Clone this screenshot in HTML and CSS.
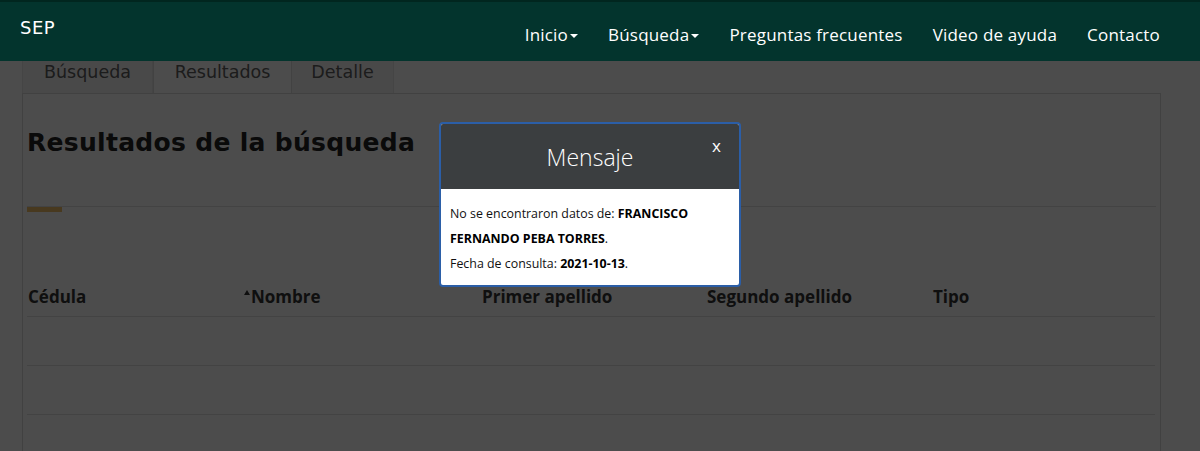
FILE: index.html
```
<!DOCTYPE html>
<html lang="es">
<head>
  <meta charset="UTF-8" />
  <title>Cédula profesional - Resultados</title>
  <link rel="stylesheet" href="styles.css">
</head>
<body>
  <header class="navbar">
    <a href="#" class="brand">SEP</a>
    <nav class="menu">
      <a href="#">Inicio<span class="caret"></span></a>
      <a href="#">Búsqueda<span class="caret"></span></a>
      <a href="#">Preguntas frecuentes</a>
      <a href="#">Video de ayuda</a>
      <a href="#">Contacto</a>
    </nav>
  </header>

  <main class="page">
    <div class="tabs">
      <div class="tab">Búsqueda</div>
      <div class="tab active">Resultados</div>
      <div class="tab">Detalle</div>
    </div>

    <section class="panel">
      <h1>Resultados de la búsqueda</h1>
      <div class="rule"></div>

      <table class="results">
        <thead>
          <tr>
            <th class="c1">Cédula</th>
            <th class="c2"><span class="sort"></span>Nombre</th>
            <th class="c3">Primer apellido</th>
            <th class="c4">Segundo apellido</th>
            <th>Tipo</th>
          </tr>
        </thead>
        <tbody>
          <tr><td></td><td></td><td></td><td></td><td></td></tr>
          <tr class="odd"><td></td><td></td><td></td><td></td><td></td></tr>
        </tbody>
      </table>
    </section>
  </main>

  <div class="overlay"></div>

  <div class="modal">
    <div class="modal-head">
      <h2>Mensaje</h2>
      <span class="close">x</span>
    </div>
    <div class="modal-body">
      <p>No se encontraron datos de: <b>FRANCISCO</b><br><b>FERNANDO PEBA TORRES</b>.</p>
      <p>Fecha de consulta: <b>2021-10-13</b>.</p>
    </div>
  </div>
</body>
</html>
```

FILE: styles.css
```
html, body {
  margin: 0;
  padding: 0;
  height: 100%;
  overflow: hidden;
  background: #fff;
  font-family: 'Open Sans', 'Liberation Sans', sans-serif;
}

/* Top bar (stays above the overlay) */
.navbar {
  position: fixed;
  top: 0; left: 0; right: 0;
  z-index: 20;
  height: 59px;
  border-top: 2px solid #01261f;
  background: #03342d;
  display: flex;
  align-items: center;
  justify-content: space-between;
  padding: 0 40px 0 20px;
}
.brand {
  color: #fff;
  text-decoration: none;
  font-family: 'DejaVu Sans', sans-serif;
  font-size: 18px;
  letter-spacing: 0.5px;
  margin-top: -8px;
}
.menu {
  display: flex;
  gap: 30px;
  margin-top: 6px;
}
.menu a {
  color: #fff;
  text-decoration: none;
  font-size: 17px;
  letter-spacing: 0.2px;
}
.caret {
  display: inline-block;
  margin-left: 2px;
  vertical-align: middle;
  border-top: 4px solid #fff;
  border-left: 4px solid transparent;
  border-right: 4px solid transparent;
}

/* Page */
.page {
  padding-top: 50px;
  margin-left: 22px;
  width: 1139px;
}
.tabs {
  display: flex;
}
.tab {
  height: 42px;
  line-height: 42px;
  border: 1px solid #e6e6e6;
  border-bottom: none;
  background: #f6f6f6;
  color: #5e5e5e;
  font-family: 'DejaVu Sans', sans-serif;
  font-size: 17.5px;
  text-align: center;
  width: 129px;
}
.tab + .tab { border-left: none; }
.tab.active {
  width: 137px;
  background: #fff;
  border-left: 1px solid #dcdcdc;
  border-right: 1px solid #dcdcdc;
}
.tab:last-child { width: 101px; }

.panel {
  border: 1px solid #d9d9d9;
  border-bottom: none;
  height: 357px;
  padding: 0 4px;
}
h1 {
  margin: 34px 0 0;
  font-family: 'DejaVu Sans', sans-serif;
  font-weight: bold;
  font-size: 25px;
  letter-spacing: 0.3px;
  color: #222;
}
.rule {
  margin-top: 49px;
  border-top: 1px solid #e2e2e2;
  height: 0;
}
.rule::before {
  content: '';
  display: block;
  width: 35px;
  height: 5px;
  background: #f0c06a;
}

/* Results table */
.results {
  width: 1128px;
  margin-top: 78px;
  border-collapse: collapse;
  table-layout: fixed;
}
.results th {
  text-align: left;
  padding: 0 0 8px 1px;
  font-size: 17px;
  font-weight: bold;
  color: #333;
  border-bottom: 1px solid #e0e0e0;
}
.results .c1 { width: 215px; }
.results .c2 { width: 237px; }
.results .c3 { width: 224px; }
.results .c4 { width: 225px; }
.results td {
  height: 48px;
  padding: 0;
  border-bottom: 1px solid #e0e0e0;
}
.results tr.odd td { background: #fdfdfd; }
.sort {
  display: inline-block;
  vertical-align: top;
  margin: 5px 1px 0 0;
  border-bottom: 5px solid #333;
  border-left: 3px solid transparent;
  border-right: 3px solid transparent;
}

/* Modal */
.overlay {
  position: fixed;
  inset: 0;
  z-index: 10;
  background: rgba(0, 0, 0, 0.7);
}
.modal {
  position: absolute;
  left: 439px;
  top: 122px;
  z-index: 15;
  width: 298px;
  border: 2px solid #2b5ea7;
  border-radius: 4px;
  background: #fff;
  overflow: hidden;
}
.modal-head {
  position: relative;
  height: 65px;
  background: #3b3e40;
  color: #fff;
  display: flex;
  align-items: center;
  justify-content: center;
}
.modal-head h2 {
  margin: 0;
  font-weight: 300;
  font-size: 23px;
}
.close {
  position: absolute;
  right: 18px;
  top: 10px;
  font-size: 17px;
}
.modal-body {
  padding: 12px 9px 9px;
  font-size: 12.4px;
  line-height: 25px;
  color: #111;
}
.modal-body p { margin: 0; }
.modal-body b { color: #000; }
```
